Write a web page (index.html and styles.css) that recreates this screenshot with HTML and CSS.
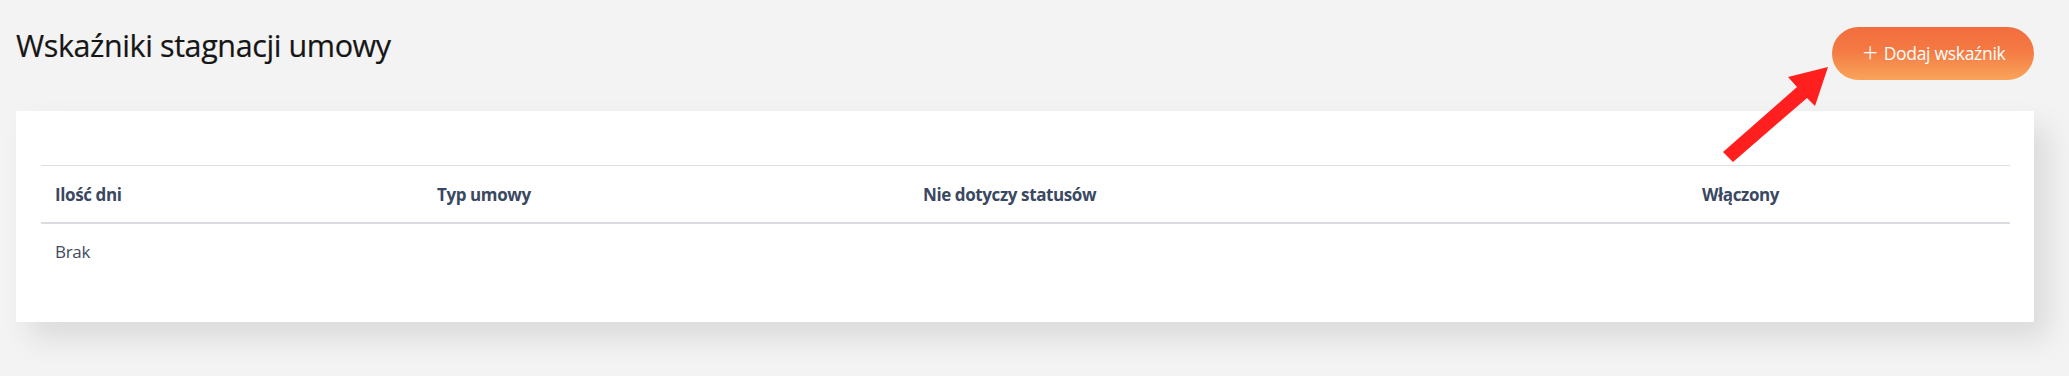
FILE: index.html
```html
<!DOCTYPE html>
<html lang="pl">
<head>
<meta charset="utf-8">
<title>Wskaźniki stagnacji umowy</title>
<link rel="stylesheet" href="styles.css">
</head>
<body>
<div class="page">
  <header class="topbar">
    <h1 class="title">Wskaźniki stagnacji umowy</h1>
    <button class="add-btn" type="button"><span class="plus">+</span>Dodaj wskaźnik</button>
  </header>
  <section class="card">
    <table class="grid">
      <colgroup>
        <col class="c1"><col class="c2"><col class="c3"><col class="c4">
      </colgroup>
      <thead>
        <tr>
          <th>Ilość dni</th>
          <th>Typ umowy</th>
          <th>Nie dotyczy statusów</th>
          <th>Włączony</th>
        </tr>
      </thead>
      <tbody>
        <tr><td colspan="4">Brak</td></tr>
      </tbody>
    </table>
  </section>
  <svg class="arrow" width="2069" height="376" viewBox="0 0 2069 376" aria-hidden="true">
    <polygon points="1828,67 1788,77 1797,87 1723,152 1733,162 1807,98 1815,106" fill="#ff1f1f"/>
  </svg>
</div>
</body>
</html>
```
FILE: styles.css
```css
html, body {
  margin: 0;
  padding: 0;
  background: #f3f3f3;
}
body {
  font-family: "Open Sans", "Noto Sans", "DejaVu Sans", sans-serif;
  width: 2069px;
  height: 376px;
  overflow: hidden;
}
.page {
  position: relative;
  padding: 0 35px 0 16px;
}
.topbar {
  display: flex;
  justify-content: space-between;
  align-items: flex-start;
}
.title {
  margin: 25px 0 0 0;
  font-size: 30.5px;
  line-height: 40px;
  font-weight: 400;
  color: #161616;
  letter-spacing: -0.4px;
  -webkit-text-stroke: 0.2px #161616;
}
.add-btn {
  margin-top: 27px;
  width: 202px;
  height: 53px;
  border: none;
  border-radius: 27px;
  background: linear-gradient(180deg, #f26d3e 0%, #f47a43 45%, #f9a45b 100%);
  color: #fff;
  font-family: inherit;
  font-size: 17.5px;
  font-weight: 400;
  display: flex;
  align-items: center;
  justify-content: center;
  gap: 6px;
  padding: 0 0 2px 2px;
  letter-spacing: -0.3px;
}
.plus {
  font-size: 27px;
  font-weight: 300;
  line-height: 1;
  margin-top: -2px;
}
.card {
  margin-top: 31px;
  background: #fff;
  height: 211px;
  box-sizing: border-box;
  padding: 54px 24px 0 25px;
  box-shadow: 14px 16px 28px rgba(0, 0, 0, 0.1);
}
.grid {
  width: 100%;
  border-collapse: collapse;
  table-layout: fixed;
}
.c1 { width: 382px; }
.c2 { width: 486px; }
.c3 { width: 779px; }
.c4 { width: auto; }
.grid th {
  text-align: left;
  font-size: 17px;
  font-weight: 700;
  color: #3a4861;
  height: 56px;
  padding: 0 14px;
  border-top: 1px solid #dedfe3;
  border-bottom: 2px solid #dadce1;
  letter-spacing: -0.4px;
}
.grid td {
  font-size: 17px;
  color: #3f4b5e;
  padding: 16px 14px 0 14px;
  letter-spacing: -0.3px;
}
.arrow {
  position: absolute;
  left: 0;
  top: 0;
  pointer-events: none;
}
```
